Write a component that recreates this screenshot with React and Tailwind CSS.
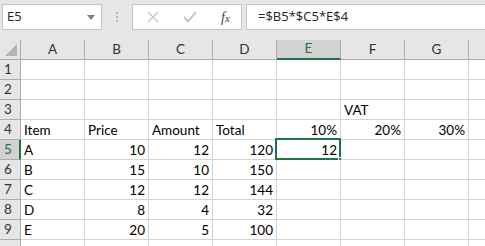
import React from "react";

const cols = ["A", "B", "C", "D", "E", "F", "G"];

// rows of cell values, [text, align]
const rows = [
  [],
  [],
  [null, null, null, null, null, ["VAT", "l"]],
  [["Item", "l"], ["Price", "l"], ["Amount", "l"], ["Total", "l"], ["10%", "r"], ["20%", "r"], ["30%", "r"]],
  [["A", "l"], ["10", "r"], ["12", "r"], ["120", "r"], ["12", "r"]],
  [["B", "l"], ["15", "r"], ["10", "r"], ["150", "r"]],
  [["C", "l"], ["12", "r"], ["12", "r"], ["144", "r"]],
  [["D", "l"], ["8", "r"], ["4", "r"], ["32", "r"]],
  [["E", "l"], ["20", "r"], ["5", "r"], ["100", "r"]],
  [],
];

function Cell({ value, selected }) {
  return (
    <div className="relative h-[20px] border-r border-b border-[#d4d4d4] bg-white">
      {value && (
        <div
          className={
            "absolute inset-0 flex items-end pb-[2px] leading-none " +
            (value[1] === "r" ? "justify-end pr-[3px]" : "pl-[3px]")
          }
        >
          {value[0]}
        </div>
      )}
      {selected && (
        <>
          <div className="absolute left-[-2px] top-[-2px] w-[66px] h-[22px] border-2 border-[#217346]" />
          <div className="absolute right-[-4px] bottom-[-4px] w-[6px] h-[6px] bg-[#217346] border border-white" />
        </>
      )}
    </div>
  );
}

export default function App() {
  return (
    <div
      className="w-[485px] h-[246px] overflow-hidden bg-[#e6e6e6] text-[13.5px] text-black"
      style={{ fontFamily: "Lato, 'Noto Sans', sans-serif" }}
    >
      {/* formula bar */}
      <div className="flex items-start h-[40px] pt-[4px]">
        <div className="ml-[2px] w-[100px] h-[26px] bg-white border border-[#c6c6c6] flex items-center justify-between pl-[4px] pr-[6px]">
          <span className="text-[#222]" style={{ fontFamily: "'Open Sans', sans-serif", fontSize: "13px" }}>E5</span>
          <svg width="8" height="5" viewBox="0 0 8 5">
            <path d="M0 0h8L4 5z" fill="#808080" />
          </svg>
        </div>
        <div className="w-[30px] h-[26px] flex flex-col items-center justify-center gap-[2px]">
          <div className="w-[2px] h-[2px] bg-[#b8b8b8]" />
          <div className="w-[2px] h-[2px] bg-[#b8b8b8]" />
          <div className="w-[2px] h-[2px] bg-[#b8b8b8]" />
        </div>
        <div className="w-[110px] h-[26px] bg-white border border-[#c6c6c6] flex items-center">
          <svg className="ml-[14px]" width="12" height="12" viewBox="0 0 12 12">
            <path d="M1 1l10 10M11 1L1 11" stroke="#c3c3c3" strokeWidth="1.3" />
          </svg>
          <svg className="ml-[24px]" width="14" height="12" viewBox="0 0 14 12">
            <path d="M1 6l4 4.5L13 1" stroke="#c8c8c8" strokeWidth="2" fill="none" />
          </svg>
          <span
            className="ml-[24px] italic text-[#444]"
            style={{ fontFamily: "'Liberation Serif', serif", fontSize: "14px" }}
          >
            f<span className="text-[11px]">x</span>
          </span>
        </div>
        <div className="ml-[4px] flex-1 h-[26px] bg-white border border-[#c6c6c6] border-r-0 flex items-center pl-[11px]">
          <span className="text-[#222]" style={{ fontFamily: "'Open Sans', sans-serif", fontSize: "13px" }}>
            =$B5*$C5*E$4
          </span>
        </div>
      </div>

      {/* sheet */}
      <div className="grid grid-cols-[21px_repeat(7,64px)_1fr] leading-none">
        {/* header row */}
        <div className="relative h-[20px] border-r border-b border-[#ababab] bg-[#e6e6e6]">
          <svg className="absolute right-[3px] bottom-[3px]" width="12" height="12" viewBox="0 0 12 12">
            <path d="M12 0V12H0z" fill="#b4b4b4" />
          </svg>
        </div>
        {cols.map((c) => (
          <div
            key={c}
            className={
              "h-[20px] flex items-center justify-center border-r border-[#ababab] text-[#333] " +
              (c === "E"
                ? "bg-[#d2d2d2] border-b-2 border-b-[#217346] text-[#217346]"
                : "bg-[#e6e6e6] border-b border-b-[#ababab]")
            }
          >
            {c}
          </div>
        ))}
        <div className="h-[20px] bg-[#e6e6e6] border-b border-[#ababab]" />

        {rows.map((r, i) => (
          <React.Fragment key={i}>
            <div
              className={
                "h-[20px] flex items-center pl-[4px] border-b border-[#ababab] text-[#333] " +
                (i === 4
                  ? "bg-[#d2d2d2] border-r-2 border-r-[#217346] text-[#217346]"
                  : "bg-[#e6e6e6] border-r border-r-[#ababab]")
              }
            >
              {i < 9 ? i + 1 : ""}
            </div>
            {cols.map((c, j) => (
              <Cell key={c} value={r[j]} selected={i === 4 && j === 4} />
            ))}
            <div className="h-[20px] border-b border-[#d4d4d4] bg-white" />
          </React.Fragment>
        ))}
      </div>
    </div>
  );
}
